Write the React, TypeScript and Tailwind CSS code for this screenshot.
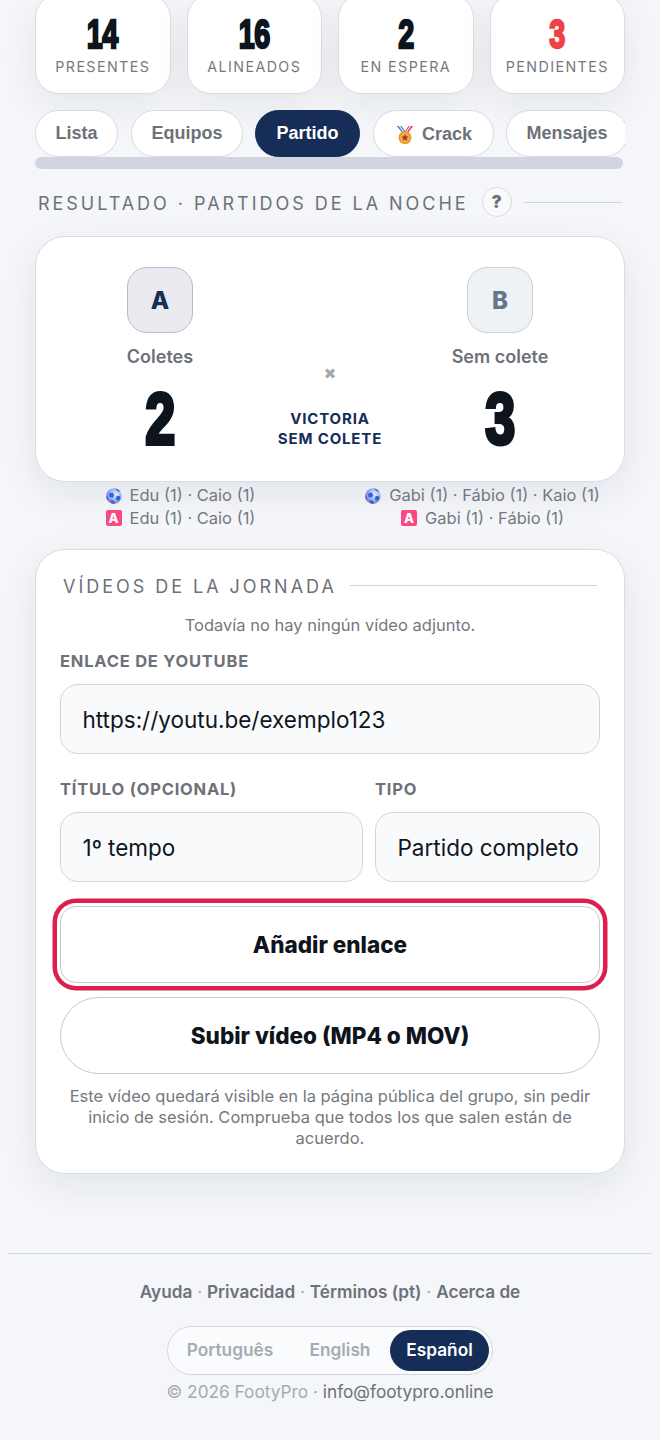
import React from "react";

const stats = [
  { value: "14", label: "PRESENTES", color: "text-[#0e141b]" },
  { value: "16", label: "ALINEADOS", color: "text-[#0e141b]" },
  { value: "2", label: "EN ESPERA", color: "text-[#0e141b]" },
  { value: "3", label: "PENDIENTES", color: "text-[#ef4146]" },
];

function Medal() {
  return (
    <svg viewBox="0 0 18 20" className="h-[20px] w-[18px] shrink-0">
      <path d="M.8 1h4.6l5 6.5H6z" fill="#3478dc" />
      <path d="M2.6 1h1.5l5 6.5H7.5z" fill="#e9f2fb" />
      <path d="M17.2 1h-4.6L8 7.5h4.2z" fill="#dc3b6e" />
      <path d="M15.4 1h-1.5L9 7.5h1.5z" fill="#f7dbe6" />
      <rect x="6.6" y="5.8" width="4.8" height="2.4" rx="0.6" fill="#f6b845" />
      <circle cx="9" cy="12.6" r="6.5" fill="#ee9434" />
      <circle cx="9" cy="12.6" r="5" fill="#f7a944" />
      <path d="m9 9.1 1.1 2.2 2.4.3-1.75 1.7.45 2.45L9 14.6l-2.2 1.15.45-2.45L5.5 11.6l2.4-.3z" fill="#96402f" />
    </svg>
  );
}

function Ball() {
  return (
    <svg viewBox="0 0 16 16" className="size-[16px] shrink-0">
      <defs>
        <radialGradient id="ball" cx="0.6" cy="0.4" r="0.65">
          <stop offset="0" stopColor="#dcebfd" />
          <stop offset="0.55" stopColor="#a3b6ea" />
          <stop offset="1" stopColor="#6668c6" />
        </radialGradient>
        <clipPath id="ballClip">
          <circle cx="8" cy="8" r="7.8" />
        </clipPath>
      </defs>
      <g clipPath="url(#ballClip)">
        <rect width="16" height="16" fill="url(#ball)" />
        <path d="M3 5.5 6.3 4.6 8.3 7 6.7 9.8 3.5 9z" fill="#2f62dc" />
        <path d="m10.4 8.4 3-.6 1.2 2.3-1.8 2.6-3-1z" fill="#2a5edc" />
        <path d="M8.5 0 13 1.2l1.2 2.6-2-.3-2.3-1.8z" fill="#3475ea" />
        <path d="M4.5 12.3 8 12.8l1 3.2H5.5z" fill="#4a56ca" />
        <path d="M0 7.5 1.6 9.5 2 12.5 0 12z" fill="#4a56ca" />
      </g>
    </svg>
  );
}

function AssistBadge() {
  return (
    <span className="flex size-[16px] shrink-0 items-center justify-center rounded-[2px] bg-[#fb4880] text-[13px] leading-none font-extrabold text-white">
      A
    </span>
  );
}

function Side({ letter, name, score, badge }: { letter: string; name: string; score: string; badge: string }) {
  return (
    <div className="flex w-[200px] flex-col items-center">
      <div className={"flex size-[66px] items-center justify-center rounded-[20px] border-[1.5px] pt-px text-[24px] font-extrabold " + badge}>
        {letter}
      </div>
      <div className="mt-[12px] text-[18px] leading-[24px] font-semibold text-[#6d7178]">{name}</div>
      <div className="mt-[21px] h-[58px] scale-x-[0.74] pl-[1px] font-['Liberation_Sans',sans-serif] text-[73px] leading-[58px] font-bold text-[#0e141b] [-webkit-text-stroke:4px_currentColor]">
        {score}
      </div>
    </div>
  );
}

function Line({ icon, children }: { icon: React.ReactNode; children: React.ReactNode }) {
  return (
    <div className="flex h-[22.5px] items-center justify-center gap-[8px] whitespace-nowrap">
      {icon}
      <span>{children}</span>
    </div>
  );
}

const field =
  "flex h-[70px] w-full items-center rounded-[18px] border-[1.5px] border-[#d2d4db] bg-[#f8fafc] px-[21.5px] pt-[2px] text-[22.5px] whitespace-nowrap text-[#10151c]";
const label = "text-[16.5px] leading-[20px] font-bold tracking-[0.78px] text-[#6d7178]";
const tab = "flex h-[47px] shrink-0 items-center justify-center rounded-full border-[1.5px] whitespace-nowrap";
const lightTab = "border-[#d8dae0] bg-white text-[#6d7178]";

export default function App() {
  return (
    <div className="flow-root min-h-[1440px] w-[660px] overflow-hidden bg-[#f4f6fa] font-['Inter',sans-serif]">
      <main className="px-[35px]">
        <section className="-mt-[6px] grid grid-cols-4 gap-[16px]">
          {stats.map((s) => (
            <div
              key={s.label}
              className="flex h-[100px] flex-col items-center rounded-[24px] border-[1.5px] border-[#dadce1] bg-white shadow-[0_12px_36px_rgba(15,25,35,0.07)]"
            >
              <div
                className={
                  "mt-[22px] h-[34px] scale-x-[0.7] font-['Liberation_Sans',sans-serif] text-[41px] leading-[34px] font-bold tracking-[-0.5px] [-webkit-text-stroke:2.4px_currentColor] " +
                  s.color
                }
              >
                {s.value}
              </div>
              <div className="mt-[6px] text-[14.25px] leading-[20px] tracking-[1.42px] whitespace-nowrap text-[#747980]">{s.label}</div>
            </div>
          ))}
        </section>

        <nav className="mt-[16px] flex h-[47px] gap-[12.5px] overflow-hidden font-['Liberation_Sans',sans-serif] text-[18px] font-bold">
          <div className={tab + " w-[83px] " + lightTab}>Lista</div>
          <div className={tab + " w-[112px] pl-px " + lightTab}>Equipos</div>
          <div className={tab + " w-[105px] border-[#152d57] bg-[#152d57] text-white"}>Partido</div>
          <div className={tab + " w-[121px] gap-[8px] pt-[2px] pl-[2px] " + lightTab}>
            <Medal />
            Crack
          </div>
          <div className={tab + " w-[122px] " + lightTab}>Mensajes</div>
        </nav>
        <div className="h-[12px] w-[588px] rounded-full bg-[#d0d5df]" />

        <div className="mt-[18px] flex h-[30px] items-center pr-[3px] pl-[3px]">
          <h2 className="pt-[2px] text-[18px] tracking-[2.97px] whitespace-nowrap text-[#6d7178]">RESULTADO · PARTIDOS DE LA NOCHE</h2>
          <span className="ml-[13px] flex size-[30px] shrink-0 items-center justify-center rounded-full border-[1.5px] border-[#d8dbe2] bg-[#f8fafc] pt-[2px] text-[17px] font-black text-[#6d7178]">
            ?
          </span>
          <span className="ml-[12.5px] h-px flex-1 bg-[#cfd3da]" />
        </div>

        <section className="mt-[18.5px] flex h-[246px] justify-between rounded-[30px] border-[1.5px] border-[#dadce1] bg-white px-[24px] pt-[30.5px] shadow-[0_12px_36px_rgba(15,25,35,0.08)]">
          <Side letter="A" name="Coletes" score="2" badge="border-[#b7bdc9] bg-[#e9ebf0] text-[#152d57]" />
          <div className="flex flex-1 flex-col items-center text-center whitespace-nowrap">
            <span className="mt-[97px] font-['DejaVu_Sans'] text-[15px] leading-[20px] font-bold text-[#a3a8af]">✖</span>
            <span className="mt-[25px] text-[15px] leading-[19.5px] font-bold tracking-[0.85px] text-[#152d57]">
              VICTORIA
              <br />
              SEM COLETE
            </span>
          </div>
          <Side letter="B" name="Sem colete" score="3" badge="border-[#cdd1d6] bg-[#eef1f5] text-[#64748b]" />
        </section>

        <div className="relative mt-[3px] flex justify-between pr-[5px] pl-[8px] text-[16.5px] text-[#747980]">
          <div className="w-[275px]">
            <Line icon={<Ball />}>Edu (1) · Caio (1)</Line>
            <Line icon={<AssistBadge />}>Edu (1) · Caio (1)</Line>
          </div>
          <div className="w-[275px]">
            <Line icon={<Ball />}>Gabi (1) · Fábio (1) · Kaio (1)</Line>
            <Line icon={<AssistBadge />}>Gabi (1) · Fábio (1)</Line>
          </div>
        </div>

        <section className="mt-[19px] h-[625px] rounded-[30px] border-[1.5px] border-[#dadce1] bg-white px-[24px] pt-[24px] shadow-[0_12px_36px_rgba(15,25,35,0.08)]">
          <div className="flex h-[24px] items-center px-[3px]">
            <h2 className="pt-[2px] text-[18px] tracking-[2.97px] whitespace-nowrap text-[#6d7178]">VÍDEOS DE LA JORNADA</h2>
            <span className="ml-[13px] h-px flex-1 bg-[#cfd3da]" />
          </div>
          <p className="mt-[17px] text-center text-[16.5px] leading-[21px] text-[#747980]">Todavía no hay ningún vídeo adjunto.</p>
          <div className={label + " mt-[15.5px]"}>ENLACE DE YOUTUBE</div>
          <div className={field + " mt-[12.5px]"}>https://youtu.be/exemplo123</div>
          <div className="mt-[25px] grid grid-cols-[303px_minmax(0,1fr)] gap-x-[12px] gap-y-[13px]">
            <div className={label}>TÍTULO (OPCIONAL)</div>
            <div className={label}>TIPO</div>
            <div className={field}>1º tempo</div>
            <div className={field}>Partido completo</div>
          </div>
          <button className="mt-[24px] block h-[77px] w-full rounded-[16px] border-[1.5px] border-[#c5c9ce] bg-white pt-px text-[22.5px] font-extrabold text-[#0e141b] shadow-[0_0_0_3px_#fff,0_0_0_7.5px_#dc1f4d]">
            Añadir enlace
          </button>
          <button className="mt-[14.5px] block h-[77px] w-full rounded-full border-[1.5px] border-[#c5c9ce] bg-white text-[22.5px] font-extrabold text-[#0e141b]">
            Subir vídeo (MP4 o MOV)
          </button>
          <p className="mt-[12px] text-center text-[16.5px] leading-[21px] text-[#747980]">
            Este vídeo quedará visible en la página pública del grupo, sin pedir
            <br />
            inicio de sesión. Comprueba que todos los que salen están de
            <br />
            acuerdo.
          </p>
        </section>
      </main>

      <footer className="mx-[8px] mt-[79px] flex flex-col items-center border-t-[1.5px] border-[#d4d8df] pt-[26px] text-[17.25px] text-[#a5abb5]">
        <div className="text-[17.2px] leading-[24px] whitespace-nowrap">
          <b className="font-semibold text-[#6d7178]">Ayuda</b> · <b className="font-semibold text-[#6d7178]">Privacidad</b> ·{" "}
          <b className="font-semibold text-[#6d7178]">Términos (pt)</b> · <b className="font-semibold text-[#6d7178]">Acerca de</b>
        </div>
        <div className="mt-[22px] flex h-[49px] w-[326px] items-center rounded-full border-[1.5px] border-[#d4d7de] bg-[#f9fbfd] p-[3px] font-semibold">
          <span className="flex-1 pr-[4px] text-center">Português</span>
          <span className="w-[97px] pr-[3px] text-center">English</span>
          <span className="flex h-[41px] w-[99px] items-center justify-center rounded-full bg-[#152d57] text-white">Español</span>
        </div>
        <div className="mt-[5px] leading-[24px] whitespace-nowrap">
          © 2026 FootyPro · <span className="text-[#6d7178]">info@footypro.online</span>
        </div>
      </footer>
    </div>
  );
}
